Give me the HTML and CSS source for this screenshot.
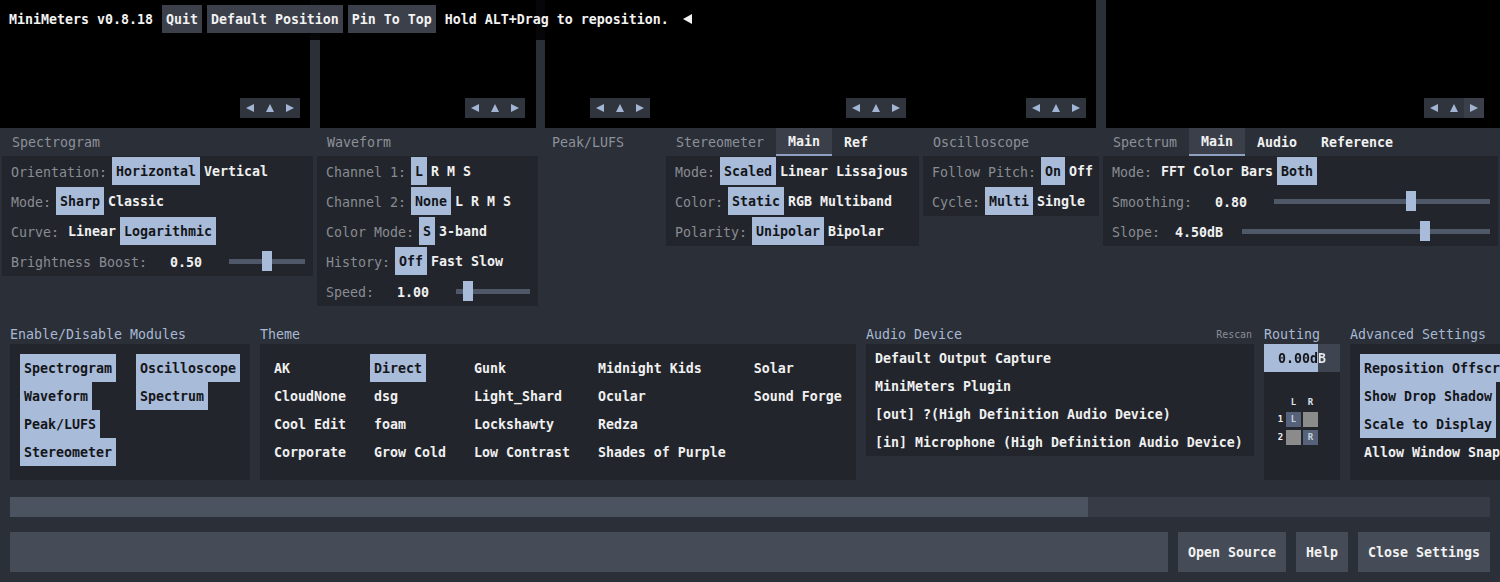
FILE: index.html
```html
<!DOCTYPE html>
<html>
<head>
<meta charset="utf-8">
<title>MiniMeters Settings</title>
<link rel="stylesheet" href="styles.css">
</head>
<body>
<div class="app">
  <div class="meters">
    <div class="pane pane-spectrogram">
      <div class="nav">
        <span class="nav-btn"><svg viewBox="0 0 20 20"><polygon points="6,10 14,6 14,14"/></svg></span>
        <span class="nav-btn"><svg viewBox="0 0 20 20"><polygon points="6,14 10,6 14,14"/></svg></span>
        <span class="nav-btn"><svg viewBox="0 0 20 20"><polygon points="6,6 14,10 6,14"/></svg></span>
      </div>
    </div>
    <div class="pane pane-waveform">
      <div class="nav">
        <span class="nav-btn"><svg viewBox="0 0 20 20"><polygon points="6,10 14,6 14,14"/></svg></span>
        <span class="nav-btn"><svg viewBox="0 0 20 20"><polygon points="6,14 10,6 14,14"/></svg></span>
        <span class="nav-btn"><svg viewBox="0 0 20 20"><polygon points="6,6 14,10 6,14"/></svg></span>
      </div>
    </div>
    <div class="pane-group">
      <div class="pane pane-peak">
        <div class="nav">
          <span class="nav-btn"><svg viewBox="0 0 20 20"><polygon points="6,10 14,6 14,14"/></svg></span>
          <span class="nav-btn"><svg viewBox="0 0 20 20"><polygon points="6,14 10,6 14,14"/></svg></span>
          <span class="nav-btn"><svg viewBox="0 0 20 20"><polygon points="6,6 14,10 6,14"/></svg></span>
        </div>
      </div>
      <div class="pane pane-stereo">
        <div class="nav">
          <span class="nav-btn"><svg viewBox="0 0 20 20"><polygon points="6,10 14,6 14,14"/></svg></span>
          <span class="nav-btn"><svg viewBox="0 0 20 20"><polygon points="6,14 10,6 14,14"/></svg></span>
          <span class="nav-btn"><svg viewBox="0 0 20 20"><polygon points="6,6 14,10 6,14"/></svg></span>
        </div>
      </div>
      <div class="pane pane-osc">
        <div class="nav">
          <span class="nav-btn"><svg viewBox="0 0 20 20"><polygon points="6,10 14,6 14,14"/></svg></span>
          <span class="nav-btn"><svg viewBox="0 0 20 20"><polygon points="6,14 10,6 14,14"/></svg></span>
          <span class="nav-btn"><svg viewBox="0 0 20 20"><polygon points="6,6 14,10 6,14"/></svg></span>
        </div>
      </div>
    </div>
    <div class="pane pane-spectrum">
      <div class="nav">
        <span class="nav-btn"><svg viewBox="0 0 20 20"><polygon points="6,10 14,6 14,14"/></svg></span>
        <span class="nav-btn"><svg viewBox="0 0 20 20"><polygon points="6,14 10,6 14,14"/></svg></span>
        <span class="nav-btn nav-hover"><svg viewBox="0 0 20 20"><polygon points="6,6 14,10 6,14"/></svg></span>
      </div>
    </div>

    <div class="topbar">
      <span class="app-title">MiniMeters v0.8.18</span>
      <span class="top-btn top-btn-first">Quit</span>
      <span class="top-btn">Default Position</span>
      <span class="top-btn">Pin To Top</span>
      <span class="hint">Hold ALT+Drag to reposition.</span>
      <svg class="collapse" viewBox="0 0 10 10"><polygon points="0,5 9,0 9,10"/></svg>
    </div>
  </div>

  <div class="module-settings">
    <section class="msec msec-spectrogram">
      <div class="tabs"><span class="tab tab-title">Spectrogram</span></div>
      <div class="box">
        <div class="row"><span class="label">Orientation:</span><span class="opt sel">Horizontal</span><span class="opt">Vertical</span></div>
        <div class="row"><span class="label">Mode:</span><span class="opt sel">Sharp</span><span class="opt">Classic</span></div>
        <div class="row"><span class="label">Curve:</span><span class="opt">Linear</span><span class="opt sel">Logarithmic</span></div>
        <div class="row"><span class="label label-slider">Brightness Boost:</span><span class="value">0.50</span><span class="slider"><span class="thumb" style="--f:0.5"></span></span></div>
      </div>
    </section>

    <section class="msec msec-waveform">
      <div class="tabs"><span class="tab tab-title">Waveform</span></div>
      <div class="box">
        <div class="row"><span class="label">Channel 1:</span><span class="opt sel">L</span><span class="opt">R</span><span class="opt">M</span><span class="opt">S</span></div>
        <div class="row"><span class="label">Channel 2:</span><span class="opt sel">None</span><span class="opt">L</span><span class="opt">R</span><span class="opt">M</span><span class="opt">S</span></div>
        <div class="row"><span class="label">Color Mode:</span><span class="opt sel">S</span><span class="opt">3-band</span></div>
        <div class="row"><span class="label">History:</span><span class="opt sel">Off</span><span class="opt">Fast</span><span class="opt">Slow</span></div>
        <div class="row"><span class="label label-slider">Speed:</span><span class="value">1.00</span><span class="slider"><span class="thumb" style="--f:0.11"></span></span></div>
      </div>
    </section>

    <section class="msec msec-peak">
      <div class="tabs"><span class="tab tab-title">Peak/LUFS</span></div>
    </section>

    <section class="msec msec-stereo">
      <div class="tabs"><span class="tab tab-title">Stereometer</span><span class="tab active">Main</span><span class="tab">Ref</span></div>
      <div class="box">
        <div class="row"><span class="label">Mode:</span><span class="opt sel">Scaled</span><span class="opt">Linear</span><span class="opt">Lissajous</span></div>
        <div class="row"><span class="label">Color:</span><span class="opt sel">Static</span><span class="opt">RGB</span><span class="opt">Multiband</span></div>
        <div class="row"><span class="label">Polarity:</span><span class="opt sel">Unipolar</span><span class="opt">Bipolar</span></div>
      </div>
    </section>

    <section class="msec msec-osc">
      <div class="tabs"><span class="tab tab-title">Oscilloscope</span></div>
      <div class="box">
        <div class="row"><span class="label">Follow Pitch:</span><span class="opt sel">On</span><span class="opt">Off</span></div>
        <div class="row"><span class="label">Cycle:</span><span class="opt sel">Multi</span><span class="opt">Single</span></div>
      </div>
    </section>

    <section class="msec msec-spectrum">
      <div class="tabs"><span class="tab tab-title">Spectrum</span><span class="tab active">Main</span><span class="tab">Audio</span><span class="tab">Reference</span></div>
      <div class="box">
        <div class="row"><span class="label">Mode:</span><span class="opt">FFT</span><span class="opt">Color Bars</span><span class="opt sel">Both</span></div>
        <div class="row"><span class="label label-slider">Smoothing:</span><span class="value">0.80</span><span class="slider"><span class="thumb" style="--f:0.64"></span></span></div>
        <div class="row"><span class="label label-slider">Slope:</span><span class="value">4.50dB</span><span class="slider"><span class="thumb" style="--f:0.748"></span></span></div>
      </div>
    </section>
  </div>

  <div class="global-settings">
    <section class="gsec gsec-modules">
      <div class="gtitle">Enable/Disable Modules</div>
      <div class="gbox gbox-full grid-list">
        <span class="opt sel">Spectrogram</span>
        <span class="opt sel">Waveform</span>
        <span class="opt sel">Peak/LUFS</span>
        <span class="opt sel">Stereometer</span>
        <span class="opt sel">Oscilloscope</span>
        <span class="opt sel">Spectrum</span>
      </div>
    </section>

    <section class="gsec gsec-theme">
      <div class="gtitle">Theme</div>
      <div class="gbox gbox-full grid-list">
        <span class="opt">AK</span>
        <span class="opt">CloudNone</span>
        <span class="opt">Cool Edit</span>
        <span class="opt">Corporate</span>
        <span class="opt sel">Direct</span>
        <span class="opt">dsg</span>
        <span class="opt">foam</span>
        <span class="opt">Grow Cold</span>
        <span class="opt">Gunk</span>
        <span class="opt">Light_Shard</span>
        <span class="opt">Lockshawty</span>
        <span class="opt">Low Contrast</span>
        <span class="opt">Midnight Kids</span>
        <span class="opt">Ocular</span>
        <span class="opt">Redza</span>
        <span class="opt">Shades of Purple</span>
        <span class="opt">Solar</span>
        <span class="opt">Sound Forge</span>
      </div>
    </section>

    <section class="gsec gsec-audio">
      <div class="gtitle gtitle-split"><span>Audio Device</span><span class="rescan">Rescan</span></div>
      <div class="gbox audio-list">
        <div class="device">Default Output Capture</div>
        <div class="device">MiniMeters Plugin</div>
        <div class="device">[out] ?(High Definition Audio Device)</div>
        <div class="device">[in] Microphone (High Definition Audio Device)</div>
      </div>
    </section>

    <section class="gsec gsec-routing">
      <div class="gtitle">Routing</div>
      <div class="gbox gbox-full routing">
        <div class="gain"><span class="gain-text">0.00dB</span></div>
        <div class="matrix">
          <span></span><span class="mh">L</span><span class="mh">R</span>
          <span class="mr">1</span><span class="cell on">L</span><span class="cell"></span>
          <span class="mr">2</span><span class="cell"></span><span class="cell on">R</span>
        </div>
      </div>
    </section>

    <section class="gsec gsec-advanced">
      <div class="gtitle">Advanced Settings</div>
      <div class="gbox gbox-full adv-list">
        <span class="opt sel">Reposition Offscreen Windows</span>
        <span class="opt sel">Show Drop Shadow</span>
        <span class="opt sel">Scale to Display</span>
        <span class="opt">Allow Window Snapping</span>
      </div>
    </section>
  </div>

  <div class="progress"><div class="progress-fill" style="width:72.84%"></div></div>

  <div class="footer">
    <div class="field"></div>
    <span class="foot-btn">Open Source</span>
    <span class="foot-btn">Help</span>
    <span class="foot-btn">Close Settings</span>
  </div>
</div>
</body>
</html>
```

FILE: styles.css
```css
* { box-sizing: border-box; }

html, body {
  margin: 0;
  padding: 0;
}

body {
  width: 1500px;
  height: 582px;
  overflow: hidden;
  background: #2b2f38;
  color: #f0f0f0;
  font-family: "DejaVu Sans Mono", "Liberation Mono", monospace;
  font-size: 13.29px;
  font-weight: bold;
  white-space: nowrap;
}

.app {
  width: 1500px;
  height: 582px;
  display: flex;
  flex-direction: column;
}

/* ---------- meter panes ---------- */
.meters {
  position: relative;
  display: flex;
  height: 128px;
  flex-shrink: 0;
}

.pane {
  background: #000;
  display: flex;
  align-items: flex-end;
  justify-content: flex-end;
  padding: 0 10px 10px 0;
}

.pane-spectrogram { width: 310px; }
.pane-waveform { width: 216px; margin-left: 10px; padding-right: 11px; }
.pane-group { display: flex; width: 551px; margin-left: 9px; }
.pane-peak { width: 115px; }
.pane-stereo { width: 256px; }
.pane-osc { width: 180px; }
.pane-spectrum { flex: 1; margin-left: 10px; padding-right: 16px; }

.nav {
  display: flex;
  height: 20px;
  background: #2f343d;
}

.nav-btn {
  width: 20px;
  height: 20px;
  display: block;
}

.nav-hover { background: #3a3f49; }

.nav-btn svg {
  display: block;
  width: 20px;
  height: 20px;
  fill: #a3b5d5;
}

.topbar {
  position: absolute;
  left: 0;
  top: 0;
  height: 40px;
  display: flex;
  align-items: flex-start;
  padding: 5px 10px 0 9px;
  background: rgba(0, 0, 0, 0.86);
}

.app-title,
.hint {
  height: 28px;
  line-height: 26px;
  padding-top: 2px;
  color: #f2f2f2;
}

.top-btn {
  height: 28px;
  line-height: 26px;
  padding: 2px 4px 0;
  margin-left: 5px;
  background: #3b404b;
  color: #f2f2f2;
}

.top-btn-first { margin-left: 9px; }

.hint { margin-left: 9px; }

.collapse {
  width: 10px;
  height: 10px;
  margin: 9px 0 0 14px;
  fill: #f2f2f2;
}

/* ---------- per-module settings ---------- */
.module-settings {
  display: flex;
  height: 196px;
  flex-shrink: 0;
}

.msec {
  padding: 0 2px;
  display: flex;
  flex-direction: column;
  align-items: stretch;
}

.msec-spectrogram { width: 315px; }
.msec-waveform { width: 225px; }
.msec-peak { width: 124px; }
.msec-stereo { width: 257px; }
.msec-osc { width: 180px; }
.msec-spectrum { flex: 1; }

.tabs {
  display: flex;
  height: 28px;
}

.tab {
  height: 28px;
  line-height: 26px;
  padding: 2px 12px 0;
  color: #f0f0f0;
}

.tab-title {
  padding: 2px 12px 0 10px;
  color: #8d9198;
  font-weight: normal;
}

.tab.active {
  background: #3a3f4a;
  border-bottom: 2px solid #8fa1c0;
  line-height: 24px;
}

.box {
  background: #22252c;
  padding: 1px 8px 1px 9px;
  display: flex;
  flex-direction: column;
  gap: 2px;
}

.row {
  display: flex;
  align-items: center;
  height: 28px;
}

.label {
  color: #898c92;
  font-weight: normal;
  margin-right: 5px;
  padding-top: 2px;
}

.label-slider { margin-right: 0; }

.opt {
  height: 28px;
  line-height: 26px;
  padding: 2px 4px 0;
  color: #f0f0f0;
}

.opt.sel {
  background: #a8bbd9;
  color: #14161a;
}

.value {
  width: 78px;
  text-align: center;
  color: #f0f0f0;
  padding-top: 2px;
}

.slider {
  position: relative;
  flex: 1;
  height: 5px;
  margin-left: 4px;
  background: #4e5869;
}

.thumb {
  position: absolute;
  top: -8px;
  left: calc(var(--f) * (100% - 10px));
  width: 10px;
  height: 20px;
  background: #a8bbd9;
}

/* ---------- global settings ---------- */
.global-settings {
  display: flex;
  gap: 10px;
  padding-left: 10px;
  height: 156px;
  align-items: flex-start;
  flex-shrink: 0;
}

.gsec {
  display: flex;
  flex-direction: column;
  flex-shrink: 0;
}

.gsec-modules { width: 240px; }
.gsec-theme { width: 596px; }
.gsec-audio { width: 388px; }
.gsec-routing { width: 76px; }
.gsec-advanced { width: 240px; }

.gtitle {
  height: 20px;
  line-height: 18px;
  padding-top: 2px;
  color: #a9b9d3;
  font-weight: normal;
}

.gtitle-split {
  display: flex;
  justify-content: space-between;
  align-items: center;
}

.rescan {
  font-size: 9.9px;
  color: #8a8e96;
  padding-right: 2px;
}

.gbox { background: #22252c; }

.gbox-full { height: 136px; }

.grid-list {
  display: grid;
  grid-template-rows: repeat(4, 28px);
  grid-auto-flow: column;
  grid-auto-columns: max-content;
  column-gap: 20px;
  justify-content: start;
  justify-items: start;
  padding: 10px;
}

.audio-list {
  display: flex;
  flex-direction: column;
}

.device {
  height: 28px;
  line-height: 26px;
  padding: 2px 9px 0;
  color: #f0f0f0;
}

.routing {
  display: flex;
  flex-direction: column;
}

.gain {
  height: 28px;
  background: linear-gradient(to right, #a8bbd9 0 54px, #3e4450 54px 100%);
}

.gain-text {
  display: block;
  height: 28px;
  line-height: 26px;
  padding-top: 2px;
  text-align: center;
  color: transparent;
  background: linear-gradient(to right, #14161a 0 54px, #e6e8ec 54px 100%);
  -webkit-background-clip: text;
  background-clip: text;
}

.matrix {
  display: grid;
  grid-template-columns: 7px 15px 15px;
  grid-template-rows: 14px 15px 15px;
  column-gap: 2px;
  row-gap: 3px;
  margin: 23px 0 0 13px;
  font-size: 9px;
  line-height: 15px;
  text-align: center;
}

.mh { line-height: 14px; color: #dfe2e8; }
.mr { color: #f0f0f0; }

.cell {
  background: #8b8b8b;
  color: #c9d1de;
}

.cell.on { background: #56627a; }

.adv-list {
  display: flex;
  flex-direction: column;
  align-items: flex-start;
  padding: 10px;
  width: 260px;
}

/* ---------- bottom ---------- */
.progress {
  height: 20px;
  margin: 17px 10px 0;
  background: #363b45;
  flex-shrink: 0;
}

.progress-fill {
  height: 100%;
  background: #4b5361;
}

.footer {
  display: flex;
  gap: 10px;
  height: 40px;
  margin-top: 15px;
  padding: 0 10px;
  flex-shrink: 0;
}

.field {
  flex: 1;
  background: #464c57;
}

.foot-btn {
  height: 40px;
  line-height: 38px;
  padding: 2px 10px 0;
  background: #464c57;
  color: #f2f2f2;
}
```
